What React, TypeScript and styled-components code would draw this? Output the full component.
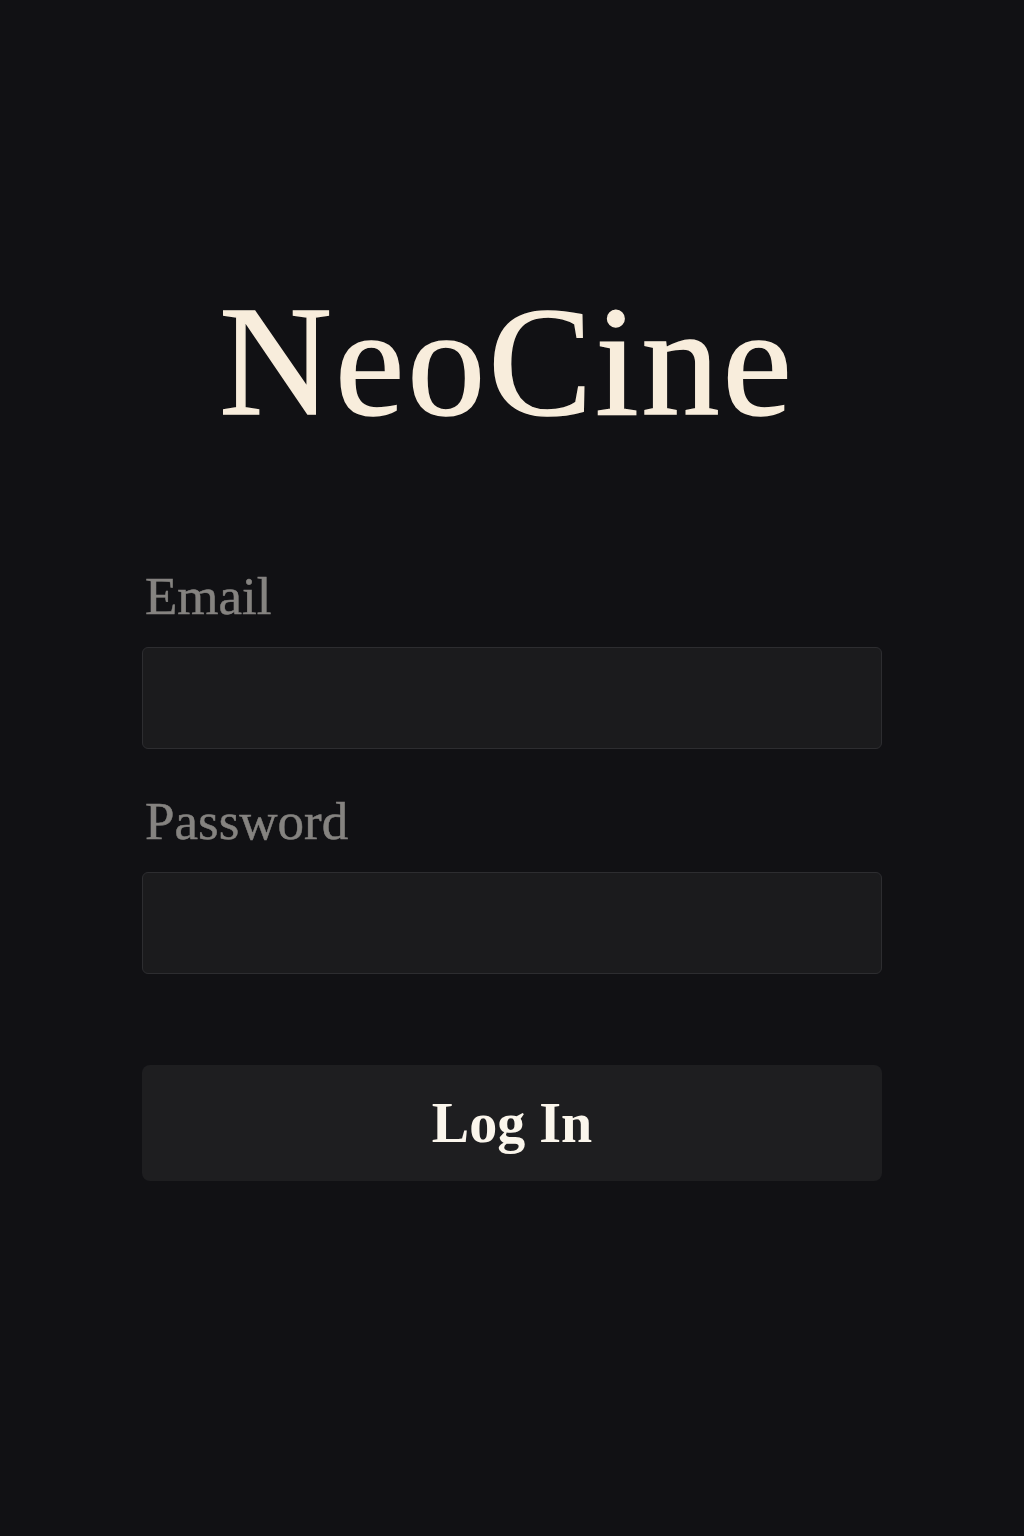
import React from 'react'
import styled, { createGlobalStyle } from 'styled-components'

const GlobalStyle = createGlobalStyle`
  html, body {
    margin: 0;
    padding: 0;
    background: #111114;
  }
  * {
    box-sizing: border-box;
  }
`

const Page = styled.main`
  min-height: 1536px;
  display: flex;
  flex-direction: column;
  align-items: center;
  padding-top: 284px;
  background: #111114;
  font-family: 'Liberation Serif', 'DejaVu Serif', serif;
`

const Title = styled.h1`
  margin: 0 10px 0 0;
  font-size: 156px;
  line-height: 1;
  font-weight: 400;
  color: #f8eddc;
  letter-spacing: 3px;
  -webkit-text-stroke: 1.5px #f8eddc;
`

const Form = styled.form`
  width: 740px;
  margin-top: 130px;
  display: flex;
  flex-direction: column;
`

const Label = styled.label<{ $gapTop?: number }>`
  margin-top: ${(p) => p.$gapTop ?? 0}px;
  padding-left: 3px;
  font-size: 53px;
  line-height: 1;
  color: #858380;
  -webkit-text-stroke: 0.5px #858380;
`

const Input = styled.input`
  margin-top: 24px;
  height: 102px;
  width: 100%;
  background: #1b1b1d;
  border: 1px solid #2d2d30;
  border-radius: 6px;
  outline: none;
  padding: 0 24px;
  font-family: inherit;
  font-size: 32px;
  color: #e8e2d6;
`

const Button = styled.button`
  margin-top: 91px;
  height: 116px;
  width: 100%;
  background: #1e1e20;
  border: none;
  border-radius: 8px;
  font-family: inherit;
  font-size: 56px;
  font-weight: 700;
  line-height: 1;
  color: #fbf6ec;
  cursor: pointer;
`

const App: React.FC = () => {
  return (
    <>
      <GlobalStyle />
      <Page>
        <Title>NeoCine</Title>
        <Form onSubmit={(e) => e.preventDefault()}>
          <Label htmlFor="email">Email</Label>
          <Input id="email" type="email" />
          <Label htmlFor="password" $gapTop={46}>
            Password
          </Label>
          <Input id="password" type="password" />
          <Button type="submit">Log In</Button>
        </Form>
      </Page>
    </>
  )
}

export default App
